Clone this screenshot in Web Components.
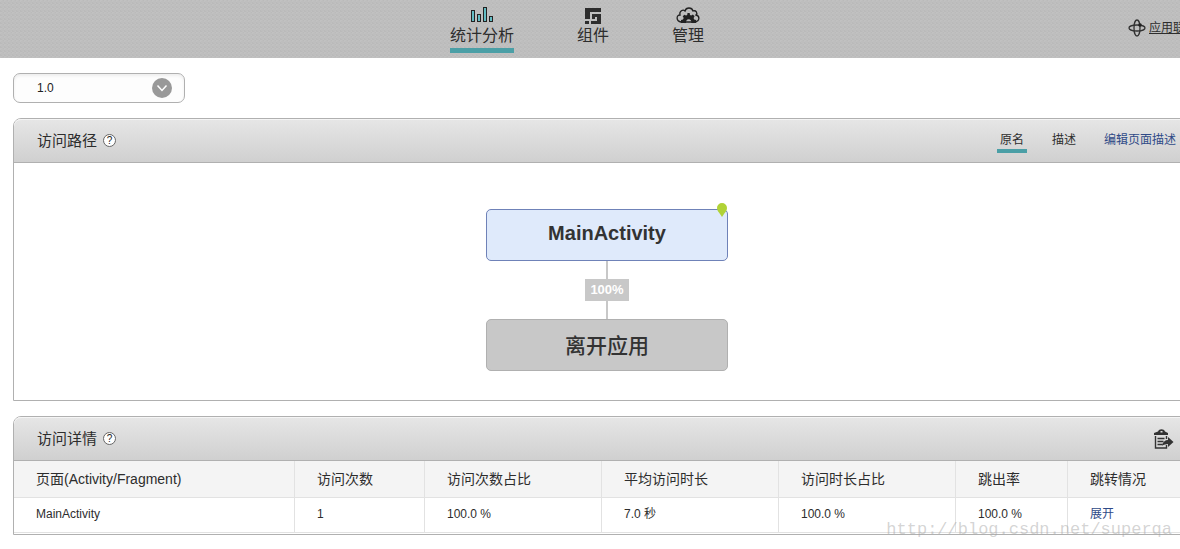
<!DOCTYPE html>
<html lang="zh-CN">
<head>
<meta charset="utf-8">
<title>统计分析</title>
<style>
html { overflow-x: hidden; }
body { margin: 0; overflow-x: hidden; background: #fff; color: #2d2d2d; font-family: "Liberation Sans", "Noto Sans CJK SC", sans-serif; font-size: 12px; }
</style>
</head>
<body>
<analytics-page></analytics-page>
<script>
const define = (name, html) => {
  const template = document.createElement('template');
  template.innerHTML = html;
  customElements.define(name, class extends HTMLElement {
    constructor() {
      super();
      this.attachShadow({ mode: 'open' }).append(template.content.cloneNode(true));
    }
  });
};

define('nav-item', `
<style>
:host { display: block; }
a { display: flex; flex-direction: column; align-items: center; padding-top: 6px; color: #2d2d2d; text-decoration: none; font-size: 16px; line-height: 24px; }
.icon { display: flex; height: 18px; }
.bar { align-self: stretch; height: 5px; }
:host([active]) .bar { background: #4b9fa6; }
</style>
<a href="#"><span class="icon"><slot name="icon"></slot></span><slot></slot><span class="bar"></span></a>`);

define('app-header', `
<style>
:host { display: flex; height: 58px; padding-left: 26px; background-color: #bebebe;
  background-image: linear-gradient(45deg, #bababa 25%, transparent 25%, transparent 75%, #bababa 75%), linear-gradient(-45deg, #c1c1c1 25%, transparent 25%, transparent 75%, #c1c1c1 75%);
  background-size: 4px 4px; }
nav { flex: 1; display: flex; justify-content: center; gap: 63px; }
.more { flex: none; display: flex; align-items: center; gap: 3px; width: 52px; height: 56px; overflow: hidden; color: #2d2d2d; white-space: nowrap; line-height: 16px; }
svg { display: block; flex: none; }
</style>
<nav>
  <nav-item active>
    <svg slot="icon" width="24" height="18" fill="#63bcc3" stroke="#222" stroke-width="1"><rect x="1.5" y="4.5" width="3" height="11"/><rect x="7.5" y="8.5" width="3" height="7"/><rect x="13.5" y="1.5" width="3" height="14"/><rect x="19.5" y="10.5" width="3" height="5"/></svg>统计分析
  </nav-item>
  <nav-item>
    <svg slot="icon" width="16" height="18" fill="#2d2d2d"><path d="M0 2h16v4H5v7H0zM7 8h9v10H6v-3h6v-4h-2v2H7zM0 15h4v3H0z"/></svg>组件
  </nav-item>
  <nav-item>
    <svg slot="icon" width="24" height="18" fill="none" stroke="#222" stroke-width="1.3"><path d="M5 16C0 15 0 9 4 9 3 5 7 3 9 5c1-4 7-4 8 0 3-1 5 2 3 4 4 1 4 6-1 7z"/><path fill="#222" stroke="none" d="M5 17v-3l2-.5.7-1.6-1-1.600 1.800-1.600L10 9.500l1.200-.5.3-2h2.200l.3 2 1.200.5 1.700-.9 1.700 1.700-1 1.600.6 1.600 2 .5v3h-5a2.700 2.700 0 1 0-5 0z"/></svg>管理
  </nav-item>
</nav>
<a class="more" href="#"><svg width="18" height="18" fill="none" stroke="#333" stroke-width="1.3"><ellipse cx="9" cy="9" rx="8" ry="3"/><ellipse cx="9" cy="9" rx="3" ry="8"/><circle cx="12" cy="6" r="1.8" fill="#222" stroke="none"/></svg><span>应用联</span></a>`);

define('version-select', `
<style>
:host { position: relative; display: block; width: 172px; height: 30px; }
select { appearance: none; box-sizing: border-box; width: 100%; height: 100%; margin: 0; padding: 0 36px 0 23px; border: 1px solid #b0b0b0; border-radius: 7px; background: #fdfdfd; box-shadow: inset 0 2px 3px #eee; color: #222; font: 12px "Liberation Sans", sans-serif; }
svg { position: absolute; top: 5px; right: 13px; pointer-events: none; }
</style>
<select aria-label="版本"><option>1.0</option></select>
<svg width="20" height="20"><circle cx="10" cy="10" r="10" fill="#999"/><path d="M5.500 7.500 10 12.500l4.500-5" fill="none" stroke="#fff" stroke-width="1.500"/></svg>`);

define('data-panel', `
<style>
:host { display: block; border: 1px solid #b0b0b0; border-radius: 8px 8px 0 0; background: #fff; }
header { box-sizing: border-box; display: flex; align-items: center; height: 44px; padding: 0 21px 0 23px; border-bottom: 1px solid #b0b0b0; border-radius: 7px 7px 0 0; background: linear-gradient(#e6e6e6, #d0d0d0); box-shadow: inset 0 1px #f5f5f5; }
h2 { margin: 0; font-size: 15px; line-height: 22px; font-weight: 400; }
button { box-sizing: border-box; width: 13px; height: 13px; margin-left: 6px; padding: 0; border: 1px solid #666; border-radius: 50%; background: #fff; color: #222; font: 10px/11px "Liberation Sans", sans-serif; text-align: center; }
.tools { margin-left: auto; }
</style>
<header><h2><slot name="title"></slot></h2><button type="button">?</button><div class="tools"><slot name="tools"></slot></div></header>
<slot></slot>`);

define('name-tabs', `
<style>
:host { display: flex; gap: 22px; padding-top: 2px; line-height: 18px; }
a { padding: 0 3px; border-bottom: 4px solid transparent; color: #2d2d2d; text-decoration: none; }
.active { border-color: #4b9fa6; }
.edit { color: #2f4a87; }
</style>
<a class="active" href="#">原名</a><a href="#">描述</a><a class="edit" href="#">编辑页面描述</a>`);

define('path-node', `
<style>
:host { position: relative; box-sizing: border-box; display: flex; align-items: center; justify-content: center; width: 242px; height: 52px; padding-bottom: 3px; border: 1px solid #b0b0b0; border-radius: 5px; background: #c8c8c8; font-size: 21px; font-weight: 500; color: #333; }
:host([current]) { border-color: #6f82b8; background: #dfeafb; font-size: 20px; font-weight: 700; }
svg { display: none; position: absolute; top: -7px; right: 0; }
:host([current]) svg { display: block; }
</style>
<slot></slot><svg width="10" height="14" fill="#b0d236"><path d="M5 0a5 5 0 0 1 5 5c0 3-2 4-3 6l-2 3-2-3C2 9 0 8 0 5a5 5 0 0 1 5-5z"/></svg>`);

define('path-link', `
<style>
:host { display: flex; flex-direction: column; align-items: center; height: 58px; }
i { flex: 1; width: 2px; background: #c8c8c8; }
span { padding: 0 5px; background: #c8c8c8; color: #fff; font-size: 13px; font-weight: 700; line-height: 22px; }
</style>
<i></i><span><slot></slot></span><i></i>`);

define('path-flow', `
<style>:host { display: flex; flex-direction: column; align-items: center; padding: 46px 0 29px; }</style>
<path-node current>MainActivity</path-node><path-link>100%</path-link><path-node>离开应用</path-node>`);

define('visit-table', `
<style>
:host { display: block; padding-bottom: 1px; }
table { width: 100%; border-collapse: separate; border-spacing: 0; table-layout: fixed; }
th, td { box-sizing: border-box; padding: 0 0 2px 22px; border-right: 1px solid #e2e2e2; border-bottom: 1px solid #e2e2e2; text-align: left; white-space: nowrap; }
th { height: 37px; background: #f4f4f4; font-size: 14px; font-weight: 400; }
td { height: 35px; font-size: 12px; line-height: 18px; }
th:last-child, td:last-child { border-right: 0; }
.page { width: 281px; } .count { width: 130px; } .wide { width: 177px; } .rate { width: 112px; }
a { color: #2f4a87; text-decoration: none; }
</style>
<table>
<thead><tr><th class="page">页面(Activity/Fragment)</th><th class="count">访问次数</th><th class="wide">访问次数占比</th><th class="wide">平均访问时长</th><th class="wide">访问时长占比</th><th class="rate">跳出率</th><th>跳转情况</th></tr></thead>
<tbody><tr><td>MainActivity</td><td>1</td><td>100.0 %</td><td>7.0 秒</td><td>100.0 %</td><td>100.0 %</td><td><a href="#">展开</a></td></tr></tbody>
</table>`);

define('export-button', `
<style>
:host { display: block; }
button { display: block; margin: 0 5px 0 0; padding: 0; border: 0; background: none; }
svg { display: block; }
</style>
<button type="button" aria-label="导出"><svg width="20" height="20" fill="#333"><path fill-rule="evenodd" d="M0 6V4l4-1.500C5-.5 10-.5 11 2.500L14 4v2zM6.500 2h2v1.500h-2z"/><path d="M1.500 7v12h11v-3M12.500 7v3M3.500 9.500h7M3.500 12.500h6M3.500 15.500h5" fill="none" stroke="#333" stroke-width="1.400"/><path d="M8 16c1-3 3-5 6-5V8l5.500 5-5.500 5v-3c-2 0-4 .5-6 1.500z"/></svg></button>`);

define('analytics-page', `
<style>
:host { position: relative; display: block; overflow-x: clip; }
main { display: flex; flex-direction: column; gap: 15px; padding: 15px 0 15px 13px; margin-right: -21px; }
.watermark { position: absolute; right: 8px; bottom: 10px; margin: 0; color: rgba(160, 160, 160, .45); font: 17px/20px "Liberation Mono", monospace; pointer-events: none; }
</style>
<app-header></app-header>
<main>
  <version-select></version-select>
  <data-panel><span slot="title">访问路径</span><name-tabs slot="tools"></name-tabs><path-flow></path-flow></data-panel>
  <data-panel><span slot="title">访问详情</span><export-button slot="tools"></export-button><visit-table></visit-table></data-panel>
</main>
<p class="watermark">http://blog.csdn.net/superqa</p>`);
</script>
</body>
</html>
